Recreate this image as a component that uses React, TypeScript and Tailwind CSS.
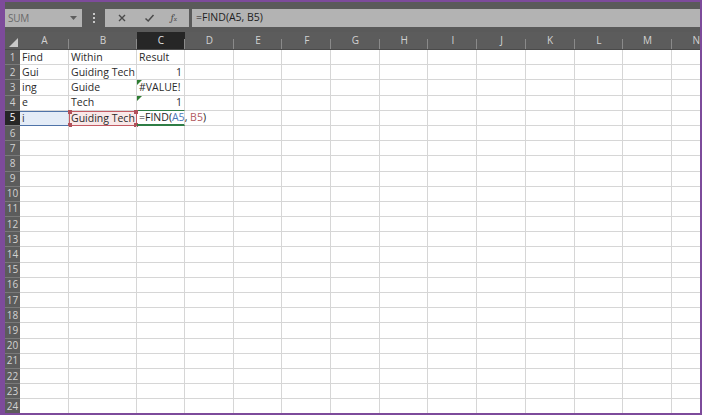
import React from "react";

const cols = ["A", "B", "C", "D", "E", "F", "G", "H", "I", "J", "K", "L", "M", "N"];
const widths: Record<string, string> = { A: "w-[49px]", B: "w-[68px]", C: "w-[48px]" };

type Cell = { text?: React.ReactNode; right?: boolean; flag?: boolean };

const data: Record<number, Cell[]> = {
  1: [{ text: "Find" }, { text: "Within" }, { text: "Result" }],
  2: [{ text: "Gui" }, { text: "Guiding Tech" }, { text: "1", right: true }],
  3: [{ text: "ing" }, { text: "Guide" }, { text: "#VALUE!", flag: true }],
  4: [{ text: "e" }, { text: "Tech" }, { text: "1", right: true, flag: true }],
};

function Flag() {
  return (
    <svg className="absolute left-0 top-0" width="5" height="5" viewBox="0 0 5 5">
      <path d="M0 0H5L0 5Z" fill="#2e7d32" />
    </svg>
  );
}

function Handle({ className }: { className: string }) {
  return <span className={`absolute w-[4px] h-[4px] bg-[#b0505a] ${className}`} />;
}

export default function App() {
  const rows = Array.from({ length: 24 }, (_, i) => i + 1);

  return (
    <div
      className="w-[702px] h-[415px] overflow-hidden bg-[#7d4b9b] pl-[5px] pr-[2px] pt-[2px] pb-[2px]"
      style={{ fontFamily: '"Open Sans", "Liberation Sans", sans-serif' }}
    >
      <div className="w-full h-full flex flex-col bg-white overflow-hidden">
        {/* formula bar */}
        <div className="h-[30px] shrink-0 bg-[#5a5a5a] flex items-center pt-[6px] pb-[4px]">
          <div className="w-[77px] h-[18px] bg-[#b3b3b3] flex items-center justify-between pl-[3px] pr-[5px]">
            <span className="text-[10px] text-[#6a6a6a] tracking-tight">SUM</span>
            <svg width="7" height="4" viewBox="0 0 7 4">
              <path d="M0 0H7L3.5 4Z" fill="#5e5e5e" />
            </svg>
          </div>
          <div className="w-[23px] flex flex-col items-center gap-[2px]">
            <span className="w-[2px] h-[2px] bg-[#c8c8c8]" />
            <span className="w-[2px] h-[2px] bg-[#c8c8c8]" />
            <span className="w-[2px] h-[2px] bg-[#c8c8c8]" />
          </div>
          <div className="w-[84px] h-[18px] bg-[#b3b3b3] flex items-center justify-around px-[4px]">
            <svg width="10" height="10" viewBox="0 0 10 10">
              <path d="M2 2L8 8M8 2L2 8" stroke="#4a4a4a" strokeWidth="1.4" />
            </svg>
            <svg width="11" height="10" viewBox="0 0 11 10">
              <path d="M1.5 5.5L4.2 8L9.5 2" stroke="#4a4a4a" strokeWidth="1.5" fill="none" />
            </svg>
            <span className="text-[10px] italic text-[#4a4a4a] font-serif leading-none">
              f<span className="text-[7px]">x</span>
            </span>
          </div>
          <div className="ml-[3px] flex-1 h-[18px] bg-[#b3b3b3] flex items-center pl-[4px]">
            <span className="text-[10.5px] text-[#1e1e1e]">=FIND(A5, B5)</span>
          </div>
        </div>

        {/* column headers */}
        <div className="h-[18px] shrink-0 flex bg-[#5c5c5c] border-b border-[#4a4a4a]">
          <div className="w-[15px] shrink-0 relative">
            <svg className="absolute right-[2px] bottom-[2px]" width="9" height="9" viewBox="0 0 9 9">
              <path d="M9 0V9H0Z" fill="#c9c9c9" />
            </svg>
          </div>
          {cols.map((c) => (
            <div
              key={c}
              className={`${widths[c] ?? "w-[48.7px]"} shrink-0 relative flex items-center justify-center text-[10px] ${
                c === "C" ? "bg-[#262626] text-[#e0e0e0]" : "text-[#d2d2d2]"
              }`}
            >
              {c}
              <span className="absolute right-0 bottom-0 w-px h-[10px] bg-[#8a8a8a]" />
            </div>
          ))}
        </div>

        {/* rows */}
        <div className="flex-1 flex flex-col">
          {rows.map((r) => {
            const cells = data[r] ?? [];
            return (
              <div key={r} className="h-[15.2px] shrink-0 flex">
                <div
                  className={`w-[15px] shrink-0 flex items-center justify-center text-[10px] border-b border-[#7a7a7a] ${
                    r === 5 ? "bg-[#262626] text-white" : "bg-[#5c5c5c] text-[#d2d2d2]"
                  }`}
                >
                  {r}
                </div>
                {r === 5 ? (
                  <>
                    <div className="w-[49px] shrink-0 bg-[#e4ecf7] border-y border-[#4f73a8] border-r border-r-[#d6d6d6] flex items-center pl-[2px] text-[10.5px] text-[#333] leading-none">
                      i
                    </div>
                    <div className="w-[68px] shrink-0 relative bg-[#f8e8e8] border border-[#c35a63] flex items-center pl-[1px] text-[10.5px] text-[#2a2a2a] leading-none whitespace-nowrap">
                      Guiding Tech
                      <Handle className="-left-[2px] -top-[2px]" />
                      <Handle className="-right-[2px] -top-[2px]" />
                      <Handle className="-left-[2px] -bottom-[2px]" />
                      <Handle className="-right-[2px] -bottom-[2px]" />
                    </div>
                    <div className="w-[48px] shrink-0 relative border-b-2 border-[#2e7d45] border-r border-r-[#d6d6d6] flex items-center pl-[2px] text-[10.5px] text-[#1e1e1e] leading-none whitespace-nowrap overflow-visible z-10">
                      =FIND(<span className="text-[#4a78b8]">A5</span>,&nbsp;<span className="text-[#b25a62]">B5</span>)
                    </div>
                  </>
                ) : (
                  [0, 1, 2].map((i) => {
                    const cell = cells[i];
                    const w = i === 0 ? "w-[49px]" : i === 1 ? "w-[68px]" : "w-[48px]";
                    return (
                      <div
                        key={i}
                        className={`${w} shrink-0 relative border-r border-b border-[#d6d6d6] flex items-center px-[2px] text-[10.5px] text-[#2a2a2a] leading-none whitespace-nowrap ${
                          cell?.right ? "justify-end" : ""
                        } ${i === 2 && r === 4 ? "border-b-[#2e7d45]" : ""}`}
                      >
                        {cell?.flag && <Flag />}
                        {cell?.text}
                      </div>
                    );
                  })
                )}
                {cols.slice(3).map((c) => (
                  <div key={c} className="w-[48.7px] shrink-0 border-r border-b border-[#d6d6d6]" />
                ))}
              </div>
            );
          })}
        </div>
      </div>
    </div>
  );
}
